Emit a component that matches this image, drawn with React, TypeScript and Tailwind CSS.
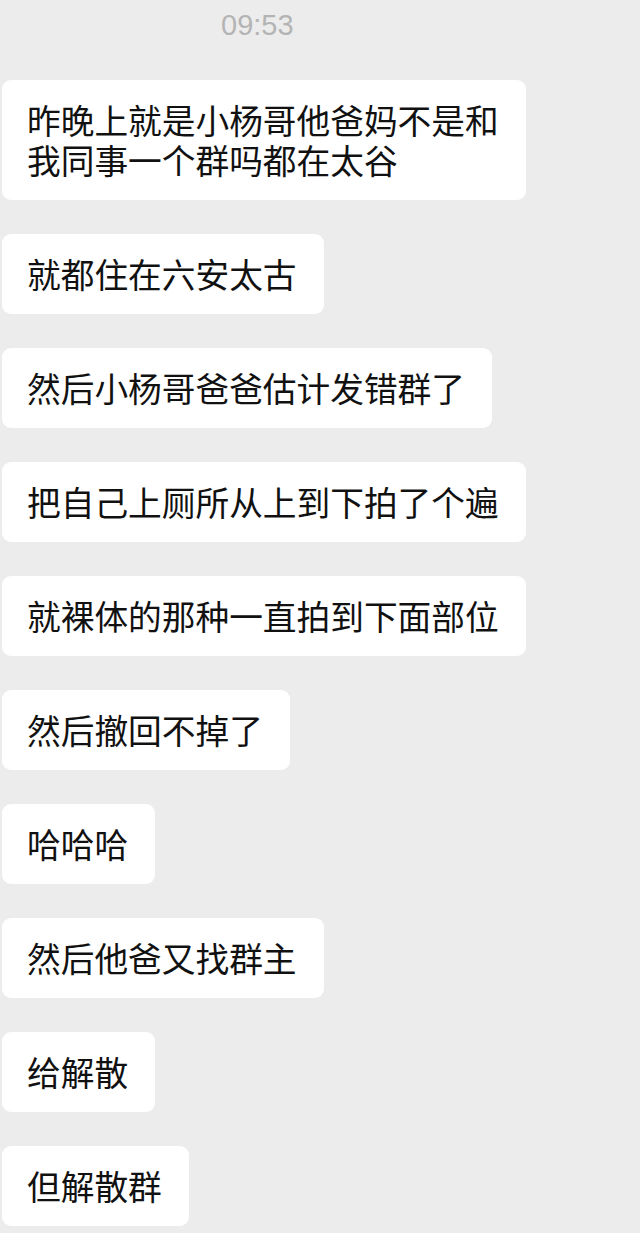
const messages: string[][] = [
  ["昨晚上就是小杨哥他爸妈不是和", "我同事一个群吗都在太谷"],
  ["就都住在六安太古"],
  ["然后小杨哥爸爸估计发错群了"],
  ["把自己上厕所从上到下拍了个遍"],
  ["就裸体的那种一直拍到下面部位"],
  ["然后撤回不掉了"],
  ["哈哈哈"],
  ["然后他爸又找群主"],
  ["给解散"],
  ["但解散群"],
];

export default function App() {
  return (
    <div className="h-[1233px] w-[640px] overflow-hidden bg-[#ececec]">
      <div className="pl-[221px] pt-[10px] font-['Liberation_Sans',sans-serif] text-[29px] leading-[30px] text-[#b4b4b4]">
        09:53
      </div>
      <div className="mt-[40px] flex flex-col items-start gap-[34px] pl-[2px]">
        {messages.map((lines, i) => (
          <div
            key={i}
            className="rounded-[9px] bg-white py-[20px] pl-[25px] pr-[27px] font-['Noto_Sans_CJK_SC',sans-serif] text-[33.7px] leading-[40px] text-[#111111]"
          >
            {lines.map((line) => (
              <div key={line} className="whitespace-nowrap">
                {line}
              </div>
            ))}
          </div>
        ))}
      </div>
    </div>
  );
}
